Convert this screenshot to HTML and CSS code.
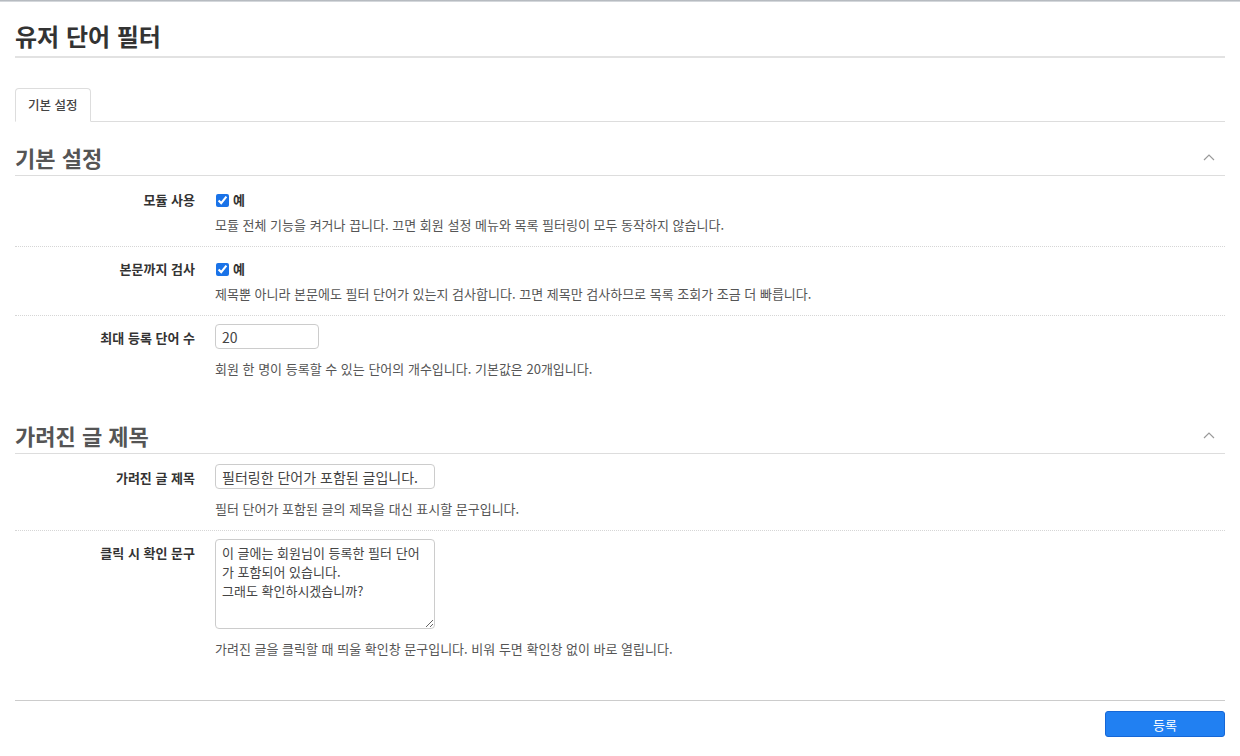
FILE: index.html
```html
<!DOCTYPE html>
<html lang="ko">
<head>
  <meta charset="UTF-8">
  <title>유저 단어 필터</title>
  <link rel="stylesheet" href="styles.css">
</head>
<body>
  <div class="topbar"></div>

  <div class="page">
    <h1 class="page-title">유저 단어 필터</h1>

    <ul class="tabs">
      <li class="tab active">기본 설정</li>
    </ul>

    <form class="settings" onsubmit="return false;">

      <!-- 기본 설정 -->
      <div class="section">
        <div class="section-head">
          <h2>기본 설정</h2>
          <svg class="chevron" width="12" height="8" viewBox="0 0 12 8"><path d="M1 7 L6 2 L11 7" fill="none" stroke="#9a9a9a" stroke-width="1.2"/></svg>
        </div>
        <div class="section-body">
          <div class="row">
            <label class="row-label">모듈 사용</label>
            <div class="row-field">
              <label class="check"><input type="checkbox" checked> 예</label>
              <p class="help">모듈 전체 기능을 켜거나 끕니다. 끄면 회원 설정 메뉴와 목록 필터링이 모두 동작하지 않습니다.</p>
            </div>
          </div>
          <div class="row">
            <label class="row-label">본문까지 검사</label>
            <div class="row-field">
              <label class="check"><input type="checkbox" checked> 예</label>
              <p class="help">제목뿐 아니라 본문에도 필터 단어가 있는지 검사합니다. 끄면 제목만 검사하므로 목록 조회가 조금 더 빠릅니다.</p>
            </div>
          </div>
          <div class="row">
            <label class="row-label">최대 등록 단어 수</label>
            <div class="row-field">
              <input class="text small" type="text" value="20">
              <p class="help">회원 한 명이 등록할 수 있는 단어의 개수입니다. 기본값은 20개입니다.</p>
            </div>
          </div>
        </div>
      </div>

      <!-- 가려진 글 제목 -->
      <div class="section">
        <div class="section-head">
          <h2>가려진 글 제목</h2>
          <svg class="chevron" width="12" height="8" viewBox="0 0 12 8"><path d="M1 7 L6 2 L11 7" fill="none" stroke="#9a9a9a" stroke-width="1.2"/></svg>
        </div>
        <div class="section-body">
          <div class="row">
            <label class="row-label">가려진 글 제목</label>
            <div class="row-field">
              <input class="text wide" type="text" value="필터링한 단어가 포함된 글입니다.">
              <p class="help">필터 단어가 포함된 글의 제목을 대신 표시할 문구입니다.</p>
            </div>
          </div>
          <div class="row">
            <label class="row-label">클릭 시 확인 문구</label>
            <div class="row-field">
              <textarea class="textarea">이 글에는 회원님이 등록한 필터 단어가 포함되어 있습니다.
그래도 확인하시겠습니까?</textarea>
              <p class="help">가려진 글을 클릭할 때 띄울 확인창 문구입니다. 비워 두면 확인창 없이 바로 열립니다.</p>
            </div>
          </div>
        </div>
      </div>

      <div class="actions">
        <button type="submit" class="btn-primary">등록</button>
      </div>
    </form>
  </div>
</body>
</html>
```

FILE: styles.css
```css
* {
  box-sizing: border-box;
}

html, body {
  margin: 0;
  padding: 0;
  background: #fff;
  color: #333;
  font-family: "Noto Sans CJK KR", "Noto Sans", sans-serif;
  font-size: 13px;
}

.topbar {
  height: 2px;
  background: linear-gradient(#a8adb3, #e2e5e8);
}

.page {
  padding: 0 15px;
}

.page-title {
  margin: 0;
  padding: 18px 0 4px;
  font-size: 24px;
  line-height: 32px;
  font-weight: bold;
  color: #333;
  border-bottom: 2px solid #e2e2e2;
}

.tabs {
  list-style: none;
  margin: 30px 0 0;
  padding: 0;
  display: flex;
  border-bottom: 1px solid #ddd;
}

.tab {
  margin-bottom: -1px;
  padding: 0 12px;
  line-height: 32px;
  font-size: 12.5px;
  font-weight: 500;
  color: #444;
  border: 1px solid transparent;
  border-radius: 4px 4px 0 0;
}

.tab.active {
  background: #fff;
  border-color: #ddd;
  border-bottom-color: #fff;
}

.section {
  padding-bottom: 10px;
}

.section-head {
  display: flex;
  align-items: center;
  justify-content: space-between;
  margin-top: 19px;
  padding-bottom: 2px;
  border-bottom: 1px solid #ddd;
}

.section-head h2 {
  margin: 0;
  font-size: 22px;
  line-height: 32px;
  font-weight: bold;
  color: #555;
}

.chevron {
  margin-right: 10px;
}

.section-body {
  padding-top: 2px;
}

.row {
  display: flex;
  padding: 12px 0 11px;
  border-bottom: 1px dotted #d6d6d6;
}

.row:last-child {
  border-bottom: none;
}

.row-label {
  width: 180px;
  flex: none;
  text-align: right;
  line-height: 20px;
  font-weight: bold;
  color: #333;
}

.row-field {
  margin-left: 20px;
  flex: 1;
}

.check {
  display: flex;
  align-items: center;
  line-height: 20px;
  font-weight: bold;
  color: #333;
}

.check input {
  width: 13px;
  height: 13px;
  margin: 0 4px 0 1px;
  accent-color: #1a73e8;
}

.help {
  margin: 5px 0 0;
  line-height: 20px;
  color: #555;
}

.text, .textarea {
  display: block;
  margin: -4px 0 0;
  border: 1px solid #ccc;
  border-radius: 4px;
  font-family: inherit;
  color: #444;
  background: #fff;
}

.text {
  height: 25px;
  padding: 0 6px;
  font-size: 14px;
}

.text.small {
  width: 104px;
}

.text.wide {
  width: 220px;
}

.text + .help,
.textarea + .help {
  margin-top: 10px;
}

.textarea {
  width: 220px;
  height: 90px;
  padding: 3px 9px 3px 6px;
  font-size: 13px;
  line-height: 19px;
  resize: vertical;
}

.actions {
  margin-top: 20px;
  padding-top: 10px;
  border-top: 1px solid #ccc;
  display: flex;
  justify-content: flex-end;
}

.btn-primary {
  width: 120px;
  height: 26px;
  border: 1px solid #1667d6;
  border-radius: 3px;
  background: #2180f2;
  color: #fff;
  font-family: inherit;
  font-size: 13px;
  cursor: pointer;
}
```
